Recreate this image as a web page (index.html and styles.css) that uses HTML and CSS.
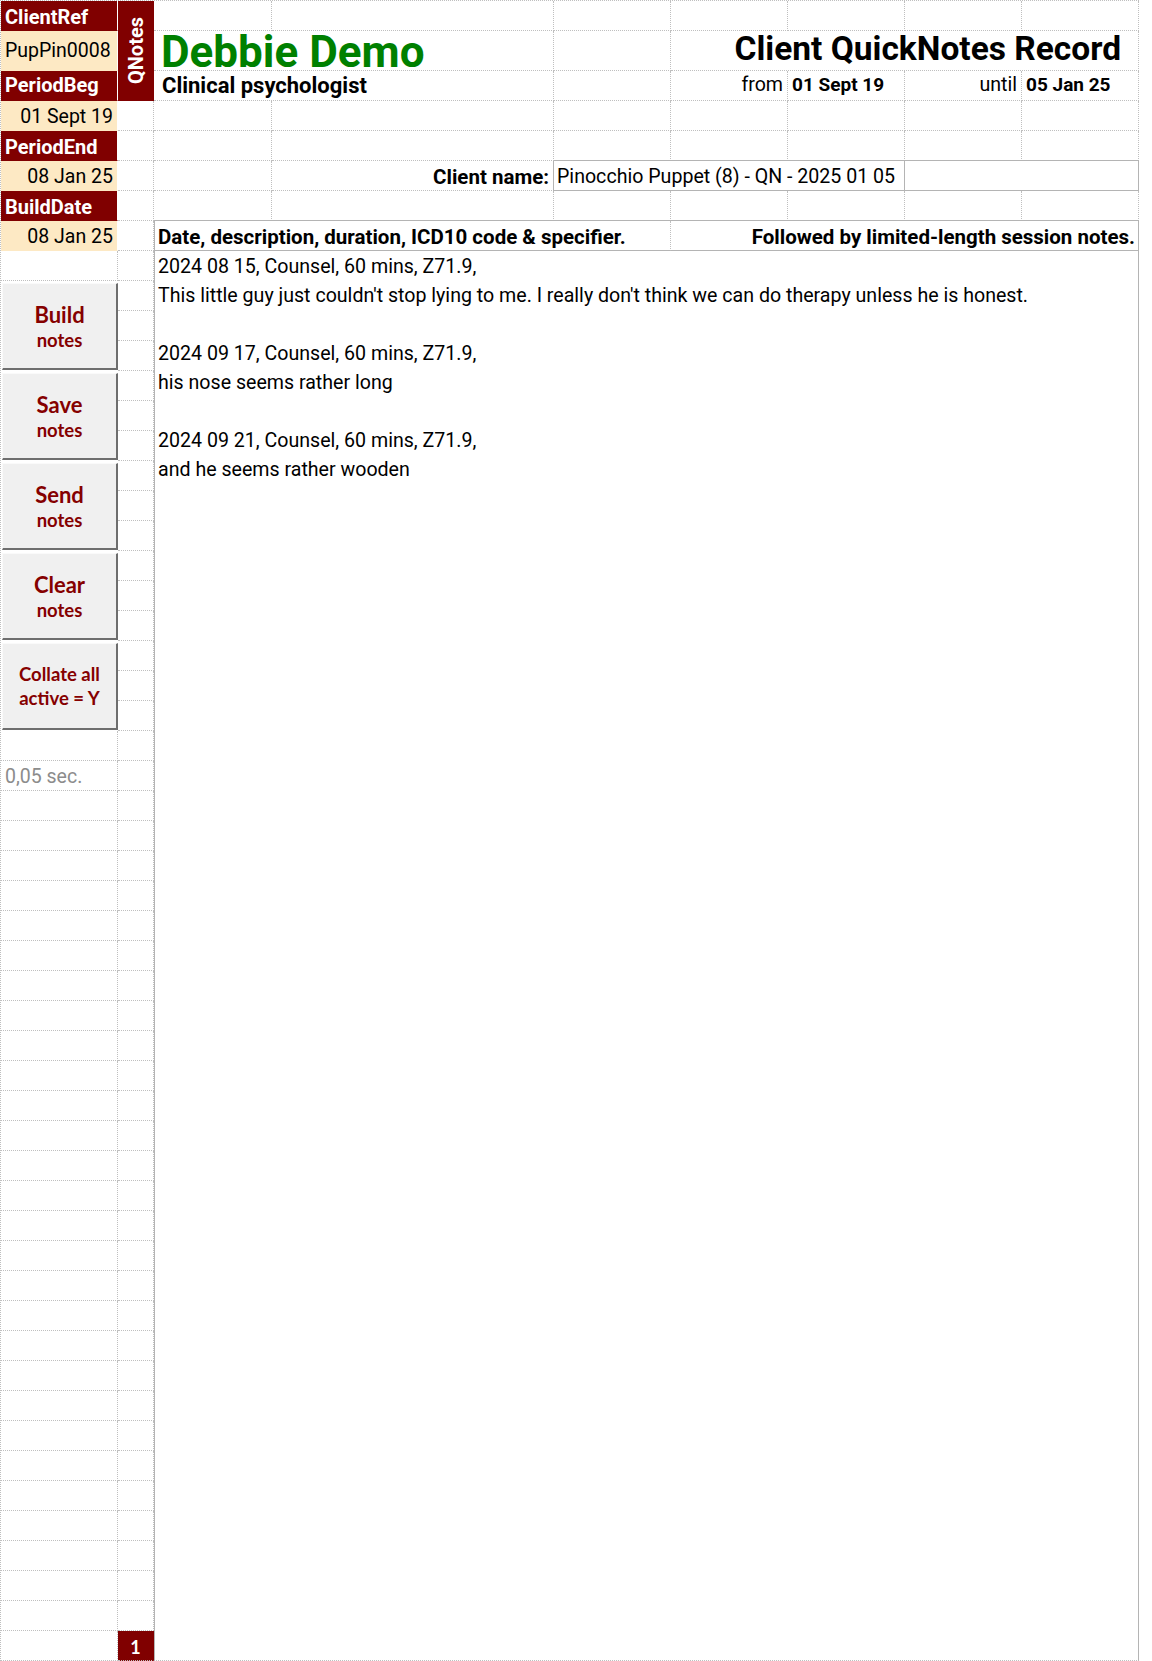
FILE: index.html
```html
<!DOCTYPE html>
<html lang="en">
<head>
    <meta charset="UTF-8">
    <meta name="viewport" content="width=device-width, initial-scale=1.0">
    <title>Client QuickNotes Record</title>
    <link rel="stylesheet" href="styles.css">
</head>
<body>
    <div class="sheet">
        <!-- header block: rows 1 to 8 -->
        <div class="top">
            <!-- row 1 -->
            <div class="c lbl">ClientRef</div>
            <div class="c qn"><span>QNotes</span></div>
            <div class="c"></div><div class="c"></div><div class="c"></div><div class="c"></div>
            <div class="c"></div><div class="c"></div><div class="c"></div>

            <!-- row 2 -->
            <div class="c val tall">PupPin0008</div>
            <div class="c name span2">Debbie Demo</div>
            <div class="c"></div>
            <div class="c title span4">Client QuickNotes Record</div>

            <!-- row 3 -->
            <div class="c lbl high">PeriodBeg</div>
            <div class="c role span2">Clinical psychologist</div>
            <div class="c"></div>
            <div class="c high right">from</div>
            <div class="c high date">01 Sept 19</div>
            <div class="c high right">until</div>
            <div class="c high date">05 Jan 25</div>

            <!-- row 4 -->
            <div class="c val right">01 Sept 19</div>
            <div class="c"></div><div class="c"></div><div class="c"></div><div class="c"></div>
            <div class="c"></div><div class="c"></div><div class="c"></div><div class="c"></div>

            <!-- row 5 -->
            <div class="c lbl">PeriodEnd</div>
            <div class="c"></div><div class="c"></div><div class="c"></div><div class="c"></div>
            <div class="c"></div><div class="c"></div><div class="c"></div><div class="c"></div>

            <!-- row 6 -->
            <div class="c val right">08 Jan 25</div>
            <div class="c"></div><div class="c"></div>
            <div class="c right bold">Client name:</div>
            <div class="c box box-first span3">Pinocchio Puppet (8) - QN - 2025 01 05</div>
            <div class="c box span2"></div>

            <!-- row 7 -->
            <div class="c lbl">BuildDate</div>
            <div class="c"></div><div class="c"></div><div class="c"></div><div class="c"></div>
            <div class="c"></div><div class="c"></div><div class="c"></div><div class="c"></div>

            <!-- row 8 -->
            <div class="c val right">08 Jan 25</div>
            <div class="c"></div>
            <div class="c head head-l span3">Date, description, duration, ICD10 code &amp; specifier.</div>
            <div class="c head head-r span4">Followed by limited-length session notes.</div>
        </div>

        <!-- notes block -->
        <div class="lower">
            <div class="col-a">
                <div class="c"></div>
                <div class="buttons">
                    <button class="btn"><span class="big">Build</span><span class="small">notes</span></button>
                    <button class="btn"><span class="big">Save</span><span class="small">notes</span></button>
                    <button class="btn"><span class="big">Send</span><span class="small">notes</span></button>
                    <button class="btn"><span class="big">Clear</span><span class="small">notes</span></button>
                    <button class="btn"><span class="small">Collate all</span><span class="small">active = Y</span></button>
                </div>
                <div class="c"></div>
                <div class="c timing">0,05 sec.</div>
                <div class="c"></div><div class="c"></div><div class="c"></div><div class="c"></div><div class="c"></div>
                <div class="c"></div><div class="c"></div><div class="c"></div><div class="c"></div><div class="c"></div>
                <div class="c"></div><div class="c"></div><div class="c"></div><div class="c"></div><div class="c"></div>
                <div class="c"></div><div class="c"></div><div class="c"></div><div class="c"></div><div class="c"></div>
                <div class="c"></div><div class="c"></div><div class="c"></div><div class="c"></div><div class="c"></div>
                <div class="c"></div><div class="c"></div><div class="c"></div><div class="c"></div>
            </div>

            <div class="col-b">
                <div class="c"></div><div class="c"></div><div class="c"></div><div class="c"></div><div class="c"></div>
                <div class="c"></div><div class="c"></div><div class="c"></div><div class="c"></div><div class="c"></div>
                <div class="c"></div><div class="c"></div><div class="c"></div><div class="c"></div><div class="c"></div>
                <div class="c"></div><div class="c"></div><div class="c"></div><div class="c"></div><div class="c"></div>
                <div class="c"></div><div class="c"></div><div class="c"></div><div class="c"></div><div class="c"></div>
                <div class="c"></div><div class="c"></div><div class="c"></div><div class="c"></div><div class="c"></div>
                <div class="c"></div><div class="c"></div><div class="c"></div><div class="c"></div><div class="c"></div>
                <div class="c"></div><div class="c"></div><div class="c"></div><div class="c"></div><div class="c"></div>
                <div class="c"></div><div class="c"></div><div class="c"></div><div class="c"></div><div class="c"></div>
                <div class="c"></div>
                <div class="c page">1</div>
            </div>

            <div class="notes">2024 08 15, Counsel, 60 mins, Z71.9,
This little guy just couldn't stop lying to me. I really don't think we can do therapy unless he is honest.

2024 09 17, Counsel, 60 mins, Z71.9,
his nose seems rather long

2024 09 21, Counsel, 60 mins, Z71.9,
and he seems rather wooden</div>
        </div>
    </div>
</body>
</html>
```
FILE: styles.css
```css
body {
    margin: 0;
    background: #fff;
    color: #000;
    font-family: Roboto, "Liberation Sans", sans-serif;
    font-size: 19.6px;
}
.sheet {
    width: 1138px;
    border-top: 1px dotted #bfbfbf;
    border-left: 1px dotted #bfbfbf;
}
.top {
    display: grid;
    grid-template-columns: 117px 36px 118px 282px 117px 117px 117px 117px 117px;
    grid-template-rows: 30px 40px 30px 30px 30px 30px 30px 30px;
}
.c {
    box-sizing: border-box;
    border-right: 1px dotted #bfbfbf;
    border-bottom: 1px dotted #bfbfbf;
    padding: 2px 4px 0;
    line-height: 28px;
    white-space: nowrap;
    min-width: 0;
}
.span2 { grid-column: span 2; }
.span3 { grid-column: span 3; }
.span4 { grid-column: span 4; }
.right { text-align: right; }
.bold {
    font-weight: bold;
    font-size: 20.5px;
}
.date {
    font-weight: bold;
    font-size: 19px;
}
.high { padding-top: 0; }

/* coloured key cells down column A */
.lbl {
    background: #800000;
    color: #fff;
    font-weight: bold;
    font-size: 20px;
    border-right: 1px solid #fff;
    border-bottom: 1px solid #800000;
}
.val {
    background: #fde9c4;
    font-size: 19.5px;
    border-right: 1px solid #fff;
    border-bottom: 1px solid #fde9c4;
}
.tall {
    padding-top: 0;
    line-height: 40px;
}
.qn {
    grid-row: span 3;
    background: #800000;
    border-right: 1px solid #800000;
    border-bottom: 1px solid #800000;
    padding: 0;
    display: flex;
    align-items: center;
    justify-content: center;
}
.qn span {
    writing-mode: vertical-rl;
    transform: rotate(180deg);
    color: #fff;
    font-weight: bold;
    font-size: 20px;
    line-height: 24px;
}

.name {
    color: #008000;
    font-weight: bold;
    font-size: 44px;
    line-height: 42px;
    padding: 0 7px;
}
.title {
    text-align: right;
    font-weight: bold;
    font-size: 33.5px;
    line-height: 35px;
    padding: 0 17px 0 0;
}
.role {
    font-weight: bold;
    font-size: 22px;
    line-height: 29px;
    padding: 0 8px;
}

.box {
    border-right: 1px solid #b4b4b4;
    border-bottom: 1px solid #b4b4b4;
    box-shadow: 0 -1px 0 #b4b4b4;
    padding-left: 3px;
}
.box-first {
    box-shadow: 0 -1px 0 #b4b4b4, -1px 0 0 #b4b4b4;
}
.head {
    font-weight: bold;
    font-size: 20.5px;
    border-bottom: 1px solid #b4b4b4;
    box-shadow: 0 -1px 0 #b4b4b4;
}
.head-l {
    border-left: 1px solid #b4b4b4;
    padding-left: 3px;
}
.head-r {
    text-align: right;
    border-right: 1px solid #b4b4b4;
    padding-right: 3px;
}

/* lower part: key column, buttons and notes */
.lower {
    display: flex;
}
.col-a {
    width: 117px;
}
.col-b {
    width: 36px;
}
.lower .c {
    height: 30px;
}
.buttons {
    height: 450px;
    display: flex;
    flex-direction: column;
}
.btn {
    box-sizing: border-box;
    height: 87px;
    width: 116px;
    margin: 3px 0 0 1px;
    background: #f0f0f0;
    border-top: 1px solid #fafafa;
    border-left: 1px solid #fafafa;
    border-right: 2px solid #6e6e6e;
    border-bottom: 2px solid #6e6e6e;
    border-radius: 0;
    padding: 0;
    display: flex;
    flex-direction: column;
    align-items: center;
    justify-content: center;
    color: #850000;
    font-family: Lato, "Liberation Sans", sans-serif;
    font-weight: bold;
    cursor: pointer;
}
.btn:first-child {
    margin-top: 2px;
}
.btn .big {
    font-size: 22px;
    line-height: 27px;
}
.btn .small {
    font-size: 18.5px;
    line-height: 24px;
}
.timing {
    color: #8c8c8c;
    font-size: 19.5px;
}
.page {
    background: #800000;
    color: #fff;
    font-family: Lato, "Liberation Sans", sans-serif;
    font-weight: bold;
    font-size: 18px;
    text-align: center;
    padding: 2px 0 0;
    border-right-color: #800000;
}
.notes {
    box-sizing: border-box;
    width: 985px;
    height: 1410px;
    border-left: 1px solid #b4b4b4;
    border-right: 1px solid #b4b4b4;
    border-bottom: 1px dotted #bfbfbf;
    padding: 1px 3px 0;
    line-height: 29px;
    white-space: pre-line;
}
```
